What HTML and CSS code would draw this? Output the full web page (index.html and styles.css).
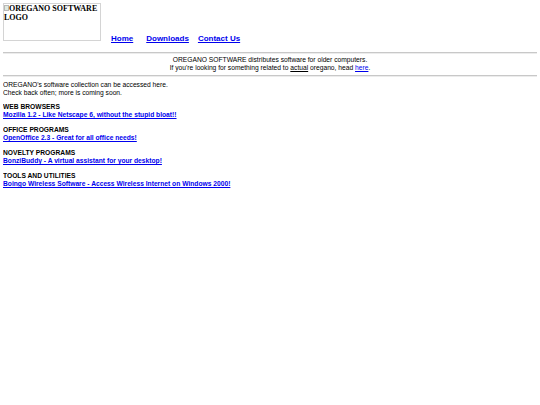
FILE: index.html
```html
<!DOCTYPE html>
<html>
<head>
<meta charset="utf-8">
<link rel="stylesheet" href="styles.css">
</head>
<body>
<div class="header">
  <div class="logo"><span class="broken"></span>OREGANO SOFTWARE LOGO</div>
  <nav class="nav">
    <a href="#" class="nav-home">Home</a>
    <a href="#" class="nav-downloads">Downloads</a>
    <a href="#" class="nav-contact">Contact Us</a>
  </nav>
</div>
<hr class="rule rule-top">
<div class="tagline">
  <div>OREGANO SOFTWARE distributes software for older computers.</div>
  <div>If you're looking for something related to <u>actual</u> oregano, head <a href="#">here</a>.</div>
</div>
<hr class="rule">
<p class="intro">OREGANO's software collection can be accessed here.<br>Check back often; more is coming soon.</p>
<div class="cat">
  <div class="cat-title">WEB BROWSERS</div>
  <a href="#" class="item">Mozilla 1.2 - Like Netscape 6, without the stupid bloat!!</a>
</div>
<div class="cat">
  <div class="cat-title">OFFICE PROGRAMS</div>
  <a href="#" class="item">OpenOffice 2.3 - Great for all office needs!</a>
</div>
<div class="cat">
  <div class="cat-title">NOVELTY PROGRAMS</div>
  <a href="#" class="item">BonziBuddy - A virtual assistant for your desktop!</a>
</div>
<div class="cat">
  <div class="cat-title">TOOLS AND UTILITIES</div>
  <a href="#" class="item">Boingo Wireless Software - Access Wireless Internet on Windows 2000!</a>
</div>
</body>
</html>
```
FILE: styles.css
```css
html, body { background: #fff; }
body {
  margin: 3px;
  font-family: "Liberation Sans", Arial, sans-serif;
  font-size: 6.7px;
  color: #000;
}
a { color: #0000ee; }
.header {
  display: flex;
  align-items: flex-end;
}
.logo {
  width: 96px;
  height: 36px;
  border: 1px solid #d4d4d4;
  font-family: "Liberation Serif", "Times New Roman", serif;
  font-weight: bold;
  font-size: 8px;
  line-height: 9px;
}
.broken {
  display: inline-block;
  width: 3px;
  height: 4px;
  border: 1px solid #b8b8b8;
  background: #dfeadf;
  margin: 0 0 0 0;
  vertical-align: 0;
}
.nav {
  display: flex;
  font-size: 8px;
  font-weight: bold;
  line-height: 8px;
  margin-bottom: -2px;
}
.nav-home { margin-left: 10px; }
.nav-downloads { margin-left: 13px; }
.nav-contact { margin-left: 9px; }
.rule {
  border: 0;
  border-top: 1px solid #c8c8c8;
  border-bottom: 1px solid #ececec;
  margin: 0;
  height: 0;
}
.rule-top { margin-top: 11px; }
.tagline {
  text-align: center;
  line-height: 8px;
  padding: 2px 0 3px;
}
.intro {
  margin: 4px 0 7px;
  line-height: 7.5px;
}
.cat {
  margin-bottom: 7px;
  line-height: 8px;
}
.cat-title { font-weight: bold; }
.item { font-weight: bold; }
```
